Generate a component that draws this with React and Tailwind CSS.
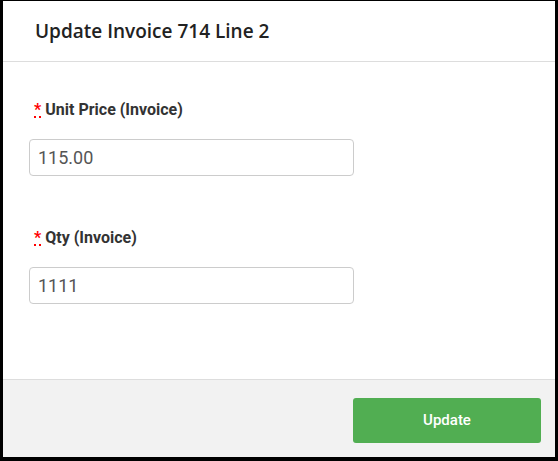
import React from "react";

export default function App() {
  return (
    <div className="w-[558px] h-[461px] bg-black pl-[3px] pr-[3px] pt-[1px] pb-[4px]">
      <div className="w-full h-full bg-white flex flex-col">
        <div className="h-[60px] flex items-center pl-[32px] border-b border-[#dddddd] box-content">
          <h1 className="text-[19px] font-semibold text-[#222222] font-['Open_Sans',sans-serif] pt-[1px]">
            Update Invoice 714 Line 2
          </h1>
        </div>
        <div className="flex-1 pl-[26px] pt-[38px] font-['Roboto',sans-serif]">
          <div className="flex items-center h-[20px] text-[16px] font-bold text-[#333333]">
            <abbr title="required" className="text-[#ff0000] no-underline border-b-2 border-dotted border-[#ff0000] leading-[13px] mr-[4px] ml-[5px]">*</abbr>
            <span>Unit Price (Invoice)</span>
          </div>
          <div className="mt-[19px] w-[325px] h-[37px] border border-[#cccccc] rounded-[4px] flex items-center pl-[8px] text-[18px] text-[#555555]">
            115.00
          </div>
          <div className="mt-[52px] flex items-center h-[20px] text-[16px] font-bold text-[#333333]">
            <abbr title="required" className="text-[#ff0000] no-underline border-b-2 border-dotted border-[#ff0000] leading-[13px] mr-[4px] ml-[5px]">*</abbr>
            <span>Qty (Invoice)</span>
          </div>
          <div className="mt-[19px] w-[325px] h-[37px] border border-[#cccccc] rounded-[4px] flex items-center pl-[8px] text-[18px] text-[#555555]">
            1111
          </div>
        </div>
        <div className="h-[78px] bg-[#f2f2f2] border-t border-[#dddddd] flex items-start justify-end pr-[14px] pt-[18px]">
          <button className="w-[188px] h-[45px] rounded-[3px] bg-[#51ae52] text-white text-[15px] font-['Roboto',sans-serif] font-medium">
            Update
          </button>
        </div>
      </div>
    </div>
  );
}
